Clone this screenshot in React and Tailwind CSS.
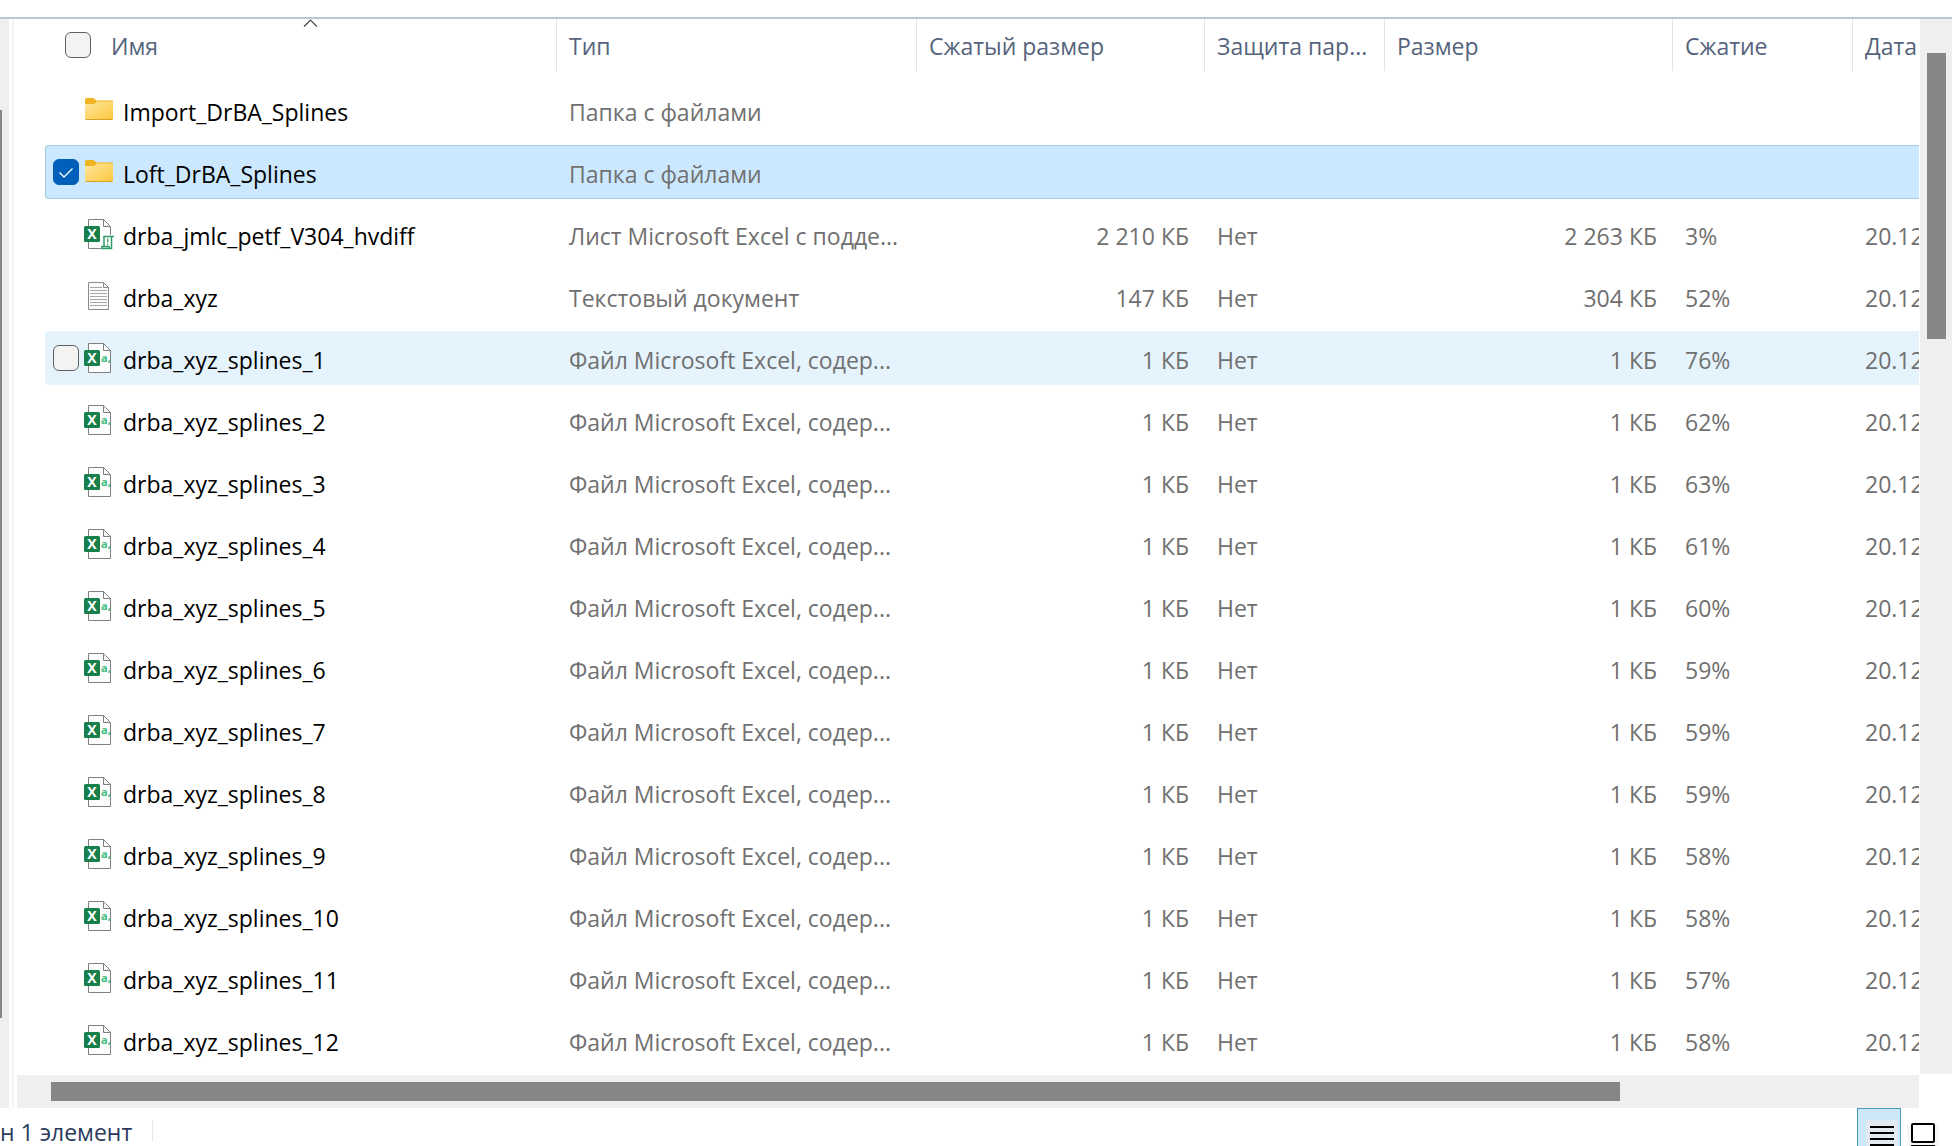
import React, { useState } from "react";

const FolderIcon = () => (
  <svg className="w-8 h-8 shrink-0" viewBox="0 0 32 32" aria-hidden="true">
    <defs>
      <linearGradient id="folder" x1="0" y1="0" x2="1" y2="1">
        <stop offset="0" stopColor="#ffe6a0" />
        <stop offset="1" stopColor="#fbc83c" />
      </linearGradient>
    </defs>
    <path d="M2 5.500Q2 4 3.500 4H10.500L13.500 6.500H29Q30 6.500 30 7.500V12H2Z" fill="#eeb422" />
    <path d="M2 10H11.500L14 7.600H30V24.500Q30 25.600 29 25.600H3Q2 25.600 2 24.500Z" fill="url(#folder)" />
    <path d="M2.500 25.500H29.500" stroke="#d9a02a" strokeWidth="1" />
  </svg>
);

const TextIcon = () => (
  <svg className="w-8 h-8 shrink-0" viewBox="0 0 32 32" fill="none" aria-hidden="true">
    <path d="M5.500 2.500H20.500L25.500 7.500V29.500H5.500Z" fill="#fbfbfb" stroke="#8b8b8b" />
    <path d="M20.500 2.500V7.500H25.500" stroke="#8b8b8b" />
    <path d="M7 7.500H19M7 10.500H24M7 13.500H24M7 16.500H24M7 19.500H24M7 22.500H24M7 25.500H24" stroke="#a6a6a6" />
  </svg>
);

// macro = книга с поддержкой макросов, иначе csv
const ExcelIcon = ({ macro }) => (
  <svg className="w-8 h-8 shrink-0" viewBox="0 0 32 32" fill="none" aria-hidden="true">
    <path d="M5.500 1.500H20.500L27.500 8.500V30.500H5.500Z" fill="#fdfdfd" stroke="#808080" />
    <path d="M20.500 1.500V8.500H27.500" stroke="#808080" />
    <rect x="1" y="8" width="16" height="16" rx="1.500" fill="#17804a" />
    <text x="9" y="21" textAnchor="middle" fill="#fff" fontFamily="Open Sans" fontWeight="700" fontSize="14">X</text>
    {macro ? (
      <g>
        <rect x="18" y="17" width="14" height="15" fill="#fff" />
        <path d="M21 28.500V18.500H31M28.500 18.500V30.500H19V28.500H26V30.500" fill="#fff" stroke="#2f9a66" strokeWidth="1.500" />
        <path d="M24.700 20.500V24.500M24.700 25.700V27" stroke="#2f9a66" strokeWidth="1.300" />
      </g>
    ) : (
      <text x="18" y="20" fill="#3dbb80" fontFamily="Open Sans" fontWeight="700" fontSize="11">a,</text>
    )}
  </svg>
);

const ICONS = {
  folder: <FolderIcon />,
  text: <TextIcon />,
  macro: <ExcelIcon macro />,
  csv: <ExcelIcon />,
};

const ratios = ["76%", "62%", "63%", "61%", "60%", "59%", "59%", "59%", "58%", "58%", "57%", "58%"];

const files = [
  { icon: "folder", name: "Import_DrBA_Splines", type: "Папка с файлами" },
  { icon: "folder", name: "Loft_DrBA_Splines", type: "Папка с файлами" },
  { icon: "macro", name: "drba_jmlc_petf_V304_hvdiff", type: "Лист Microsoft Excel с подде...", packed: "2 210 КБ", lock: "Нет", size: "2 263 КБ", ratio: "3%", date: "20.12" },
  { icon: "text", name: "drba_xyz", type: "Текстовый документ", packed: "147 КБ", lock: "Нет", size: "304 КБ", ratio: "52%", date: "20.12" },
  ...ratios.map((ratio, i) => ({
    icon: "csv",
    name: `drba_xyz_splines_${i + 1}`,
    type: "Файл Microsoft Excel, содер...",
    packed: "1 КБ",
    lock: "Нет",
    size: "1 КБ",
    ratio,
    date: "20.12",
  })),
];

const headers = ["Тип", "Сжатый размер", "Защита пар...", "Размер", "Сжатие", "Дата"];

const CheckBox = ({ label, checked, onChange, visible = true }) => (
  <span className={`relative flex w-[26px] h-[26px] shrink-0 ${visible ? "" : "opacity-0"}`}>
    <input
      type="checkbox"
      aria-label={label}
      checked={checked}
      onChange={onChange}
      className="appearance-none w-full h-full rounded-md border border-[#606060] bg-[#f3f3f3] checked:bg-[#005fb8] checked:border-[#005fb8]"
    />
    {checked && (
      <svg className="absolute inset-0 pointer-events-none" viewBox="0 0 26 26" fill="none" aria-hidden="true">
        <path d="M6.500 13.500L11 18L19.500 9.500" stroke="#fff" strokeWidth="1.300" />
      </svg>
    )}
  </span>
);

const FileRow = ({ file, selected, hovered, onToggle }) => {
  let cell = "p-0 h-[54px] border-y border-transparent";
  if (selected) cell = "p-0 h-[54px] border-y border-[#a0cfe4] bg-[#cce8ff]";
  else if (hovered) cell = "p-0 h-[54px] border-y border-[#e5f3fd] bg-[#e5f3fd]";

  return (
    <tr className="text-[#707070]">
      <td className={`${cell} border-l rounded-l-sm`}>
        <div className="flex items-center pl-[7px]">
          <CheckBox label={file.name} checked={selected} onChange={onToggle} visible={selected || hovered} />
          <span className="ml-1">{ICONS[file.icon]}</span>
          <span className="ml-2 pt-1 text-black">{file.name}</span>
        </div>
      </td>
      <td className={`${cell} pl-[13px] pt-1`}>{file.type}</td>
      <td className={`${cell} pr-[15px] pt-1 text-right`}>{file.packed}</td>
      <td className={`${cell} pl-[13px] pt-1`}>{file.lock}</td>
      <td className={`${cell} pr-[15px] pt-1 text-right`}>{file.size}</td>
      <td className={`${cell} pl-[13px] pt-1`}>{file.ratio}</td>
      <td className={`${cell} pl-[13px] pt-1 overflow-hidden`}>{file.date}</td>
    </tr>
  );
};

const App = () => {
  const [selected, setSelected] = useState([1]);
  const [hovered] = useState(4);

  const toggle = (i) =>
    setSelected((prev) => (prev.includes(i) ? prev.filter((x) => x !== i) : [...prev, i]));

  const toggleAll = () =>
    setSelected((prev) => (prev.length === files.length ? [] : files.map((_, i) => i)));

  return (
    <div className="flex flex-col h-screen overflow-hidden bg-white font-['Open_Sans',sans-serif] text-[23px] leading-8 whitespace-nowrap">
      <div className="h-[19px] shrink-0 border-b-2 border-[#bec7d1]" />

      <div className="flex shrink-0">
        {/* край панели навигации */}
        <div className="w-[9px] bg-[#efefef] pt-[91px] pb-[90px]">
          <div className="w-[2px] h-full bg-[#868686]" />
        </div>
        <div className="w-[5px] border-r-2 border-[#f5f5f5]" />

        <main className="flex-1 min-w-0 pl-[3px]">
          <div className="pl-7 overflow-hidden">
            <table className="w-full table-fixed border-separate border-spacing-x-0 border-spacing-y-2 -mt-2">
              <colgroup>
                <col className="w-[511px]" />
                <col className="w-[360px]" />
                <col className="w-[288px]" />
                <col className="w-[180px]" />
                <col className="w-[288px]" />
                <col className="w-[180px]" />
                <col />
              </colgroup>
              <thead>
                <tr className="text-left text-[#55647c]">
                  <th className="p-0 h-14 align-top font-normal">
                    <div className="relative flex items-center h-[52px] pl-5">
                      <CheckBox label="Выделить все" checked={selected.length === files.length} onChange={toggleAll} />
                      <span className="ml-5 pt-0.5">Имя</span>
                      <svg className="absolute top-0 left-1/2 w-4 h-2" viewBox="0 0 16 8" fill="none" aria-hidden="true">
                        <path d="M3 7.500L9.500 1L16 7.500" stroke="#444" strokeWidth="1.200" />
                      </svg>
                    </div>
                  </th>
                  {headers.map((header) => (
                    <th key={header} className="p-0 h-14 align-top font-normal overflow-hidden">
                      <div className="flex items-center h-[52px] pl-3 pt-0.5 border-l border-[#e0e3e8]">{header}</div>
                    </th>
                  ))}
                </tr>
              </thead>
              <tbody>
                {files.map((file, i) => (
                  <FileRow
                    key={file.name}
                    file={file}
                    selected={selected.includes(i)}
                    hovered={hovered === i}
                    onToggle={() => toggle(i)}
                  />
                ))}
              </tbody>
            </table>
          </div>

          <div className="h-[33px] py-[7px] pl-[34px] bg-[#efefef]">
            <div className="w-[84%] h-full bg-[#868686]" />
          </div>
        </main>

        <div className="w-[33px] pl-px pb-[34px]">
          <div className="h-full bg-[#efefef] pt-[34px] pl-[7px]">
            <div className="w-[19px] h-[286px] bg-[#868686]" />
          </div>
        </div>
      </div>

      <footer className="flex flex-1 min-h-0 justify-between">
        <div className="flex items-start pt-2">
          <span className="text-[#2b3a5c]">н 1 элемент</span>
          <span className="ml-5 mt-1 w-px h-[22px] bg-[#e6e6e6]" />
        </div>
        <div className="flex items-start pr-[11px] overflow-hidden">
          <button type="button" aria-label="Таблица" className="w-11 h-12 pt-2 border border-[#4a9db8] bg-[#cce8f6]">
            <svg className="w-8 h-8 ml-2" viewBox="0 0 32 32" aria-hidden="true">
              <rect width="32" height="36" rx="2" fill="#e3ebf2" />
              <path d="M4 7H28M4 13H28M4 19H28M4 25H28" stroke="#000" strokeWidth="2" />
            </svg>
          </button>
          <button type="button" aria-label="Крупные значки" className="ml-1 w-9 h-12 pt-2">
            <svg className="w-8 h-8 mx-auto" viewBox="0 0 32 32" fill="none" aria-hidden="true">
              <rect y="4" width="32" height="28" rx="2" fill="#f6f6f6" />
              <rect x="5" y="4" width="22" height="18" rx="1" fill="#fff" stroke="#000" strokeWidth="2" />
              <path d="M4 26H28" stroke="#000" strokeWidth="2" />
            </svg>
          </button>
        </div>
      </footer>
    </div>
  );
};

export default App;
